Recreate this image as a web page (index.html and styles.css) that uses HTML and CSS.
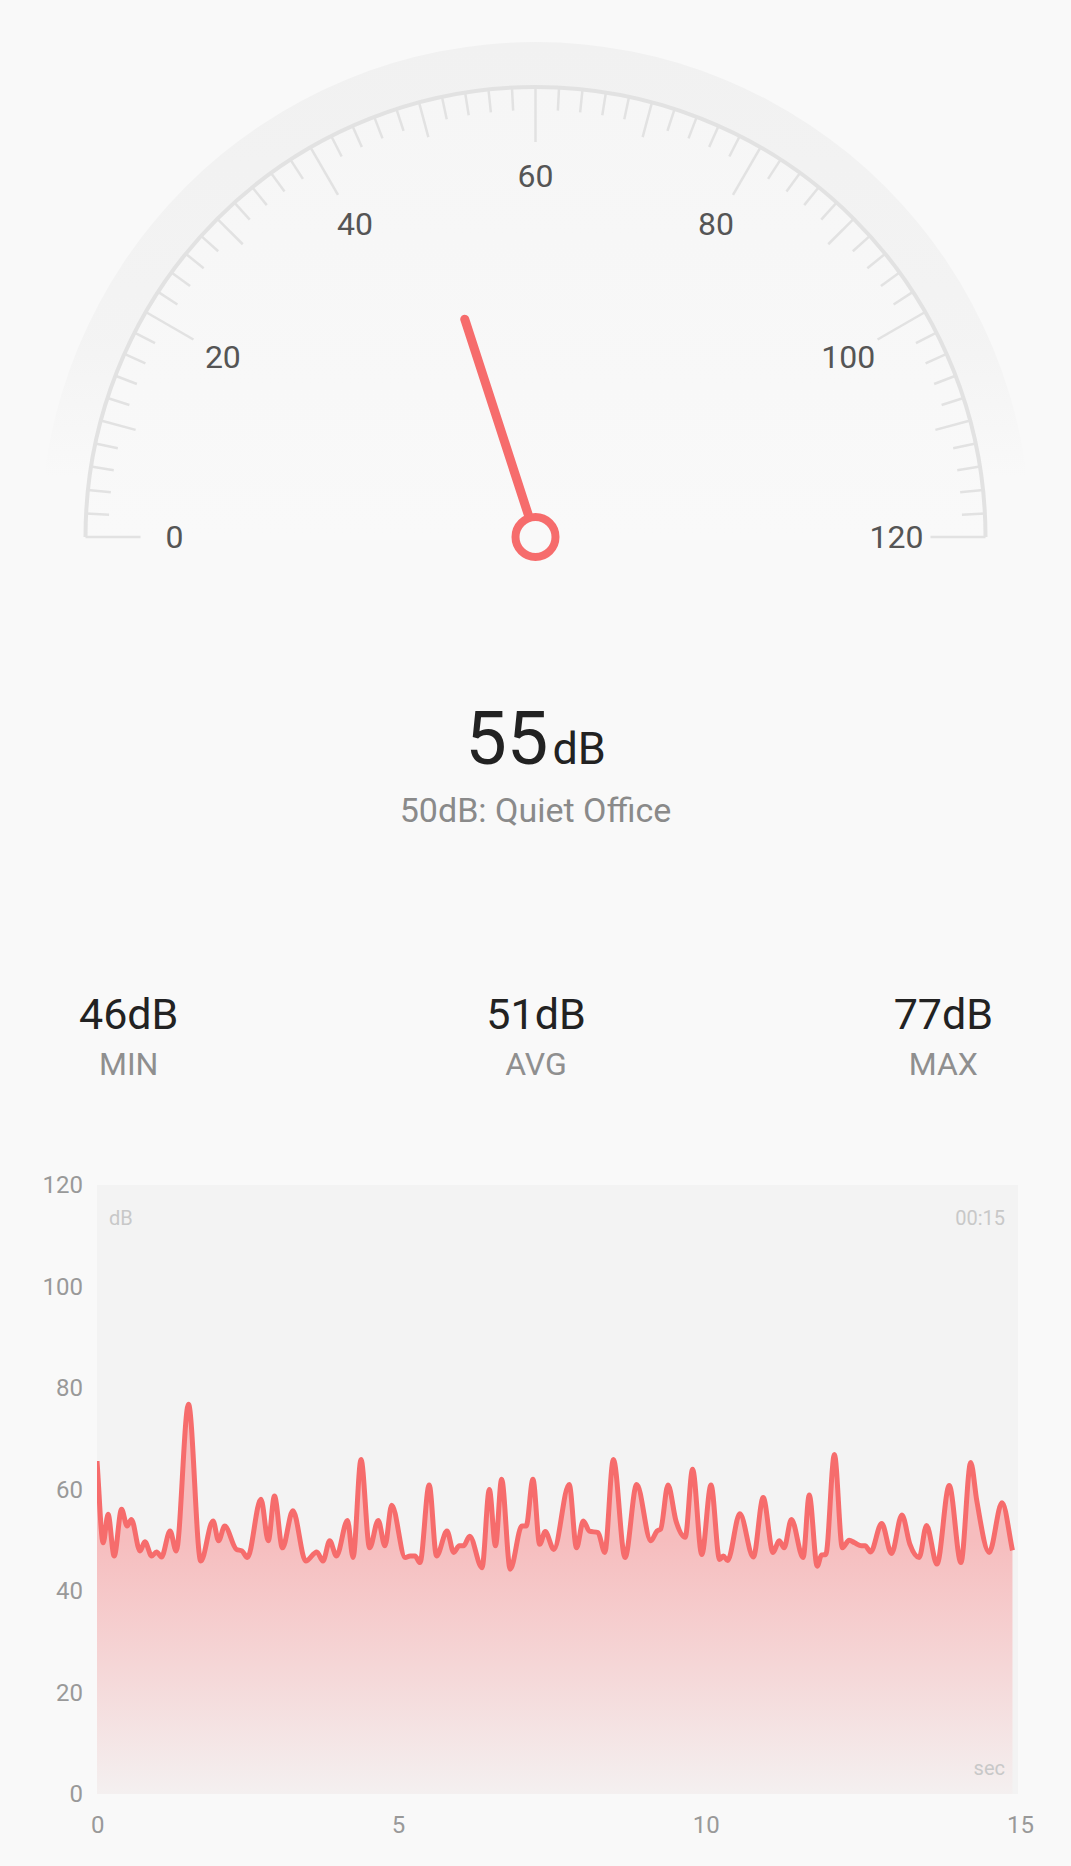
FILE: index.html
```html
<!DOCTYPE html>
<html lang="en">
<head>
    <meta charset="UTF-8">
    <meta name="viewport" content="width=device-width, initial-scale=1.0">
    <title>Sound Meter</title>
    <link rel="stylesheet" href="styles.css">
</head>
<body>
    <div class="meter">
        <!-- Dial: ticks, numbers and needle get filled in by the script -->
        <svg class="gauge" id="gauge" viewBox="0 0 1071 590" width="1071" height="590">
            <defs>
                <linearGradient id="halo-fade" x1="0" y1="42" x2="0" y2="537" gradientUnits="userSpaceOnUse">
                    <stop offset="0" stop-color="#f1f1f1" stop-opacity="1"/>
                    <stop offset="0.6" stop-color="#f1f1f1" stop-opacity="0.7"/>
                    <stop offset="0.88" stop-color="#f1f1f1" stop-opacity="0"/>
                </linearGradient>
                <linearGradient id="face-fade" x1="0" y1="87" x2="0" y2="537" gradientUnits="userSpaceOnUse">
                    <stop offset="0" stop-color="#f6f6f6"/>
                    <stop offset="1" stop-color="#f9f9f9"/>
                </linearGradient>
            </defs>
            <path class="halo" d="M40.5 537 A495 495 0 0 1 1030.5 537 Z"/>
            <path class="dial-face" d="M85.5 537 A450 450 0 0 1 985.5 537 Z"/>
            <path class="dial-arc" d="M85.5 537 A450 450 0 0 1 985.5 537"/>
            <g id="ticks"></g>
            <g id="tick-labels"></g>
            <line class="needle" id="needle"/>
            <circle class="needle-hub" cx="535.5" cy="537" r="20"/>
        </svg>

        <div class="reading">
            <span class="reading-value">55</span><span class="reading-unit">dB</span>
        </div>
        <div class="reading-note">50dB: Quiet Office</div>

        <div class="stats">
            <div class="stat">
                <div class="stat-value">46dB</div>
                <div class="stat-label">MIN</div>
            </div>
            <div class="stat">
                <div class="stat-value">51dB</div>
                <div class="stat-label">AVG</div>
            </div>
            <div class="stat">
                <div class="stat-value">77dB</div>
                <div class="stat-label">MAX</div>
            </div>
        </div>

        <div class="chart">
            <div class="y-axis">
                <span class="y-label">120</span>
                <span class="y-label">100</span>
                <span class="y-label">80</span>
                <span class="y-label">60</span>
                <span class="y-label">40</span>
                <span class="y-label">20</span>
                <span class="y-label">0</span>
            </div>
            <div class="plot">
                <svg class="plot-graph" viewBox="0 0 921 609" preserveAspectRatio="none">
                    <defs>
                        <linearGradient id="area-fade" x1="0" y1="355" x2="0" y2="609" gradientUnits="userSpaceOnUse">
                            <stop offset="0" stop-color="#f6bdbe"/>
                            <stop offset="1" stop-color="#f4f0f0"/>
                        </linearGradient>
                    </defs>
                    <path class="plot-area" id="plot-area"/>
                    <path class="plot-line" id="plot-line"/>
                </svg>
                <div class="plot-notes">
                    <div class="plot-notes-top">
                        <span>dB</span>
                        <span>00:15</span>
                    </div>
                    <div class="plot-notes-bottom">sec</div>
                </div>
            </div>
            <div class="x-axis">
                <span class="x-label">0</span>
                <span class="x-label">5</span>
                <span class="x-label">10</span>
                <span class="x-label">15</span>
            </div>
        </div>
    </div>

    <script>
        document.addEventListener("DOMContentLoaded", function() {
            const svgNS = "http://www.w3.org/2000/svg";
            const cx = 535.5, cy = 537, radius = 450;

            // last 15 seconds of readings: [seconds, dB]
            const samples = [
                [0,65.6],[0.10,49.5],[0.18,55.1],[0.28,46.9],[0.40,56.1],[0.49,52.8],[0.56,54.1],[0.70,47.9],
                [0.78,49.7],[0.89,46.9],[0.97,47.7],[1.05,46.7],[1.19,51.8],[1.29,47.9],[1.49,76.8],[1.69,45.9],
                [1.89,53.8],[1.98,49.9],[2.08,52.8],[2.27,48.2],[2.36,47.9],[2.45,46.6],[2.67,58.1],[2.79,49.9],
                [2.89,58.7],[3.02,48.5],[3.19,55.8],[3.40,45.9],[3.58,47.7],[3.68,45.9],[3.79,49.9],[3.90,46.9],
                [4.08,53.9],[4.17,46.6],[4.30,65.9],[4.44,48.5],[4.58,53.9],[4.69,48.9],[4.80,56.9],[5.02,46.6],
                [5.10,46.9],[5.18,46.9],[5.26,45.6],[5.41,60.9],[5.53,46.9],[5.70,51.8],[5.81,47.6],[5.90,48.9],
                [5.97,48.9],[6.07,50.8],[6.27,44.6],[6.39,60.0],[6.49,48.9],[6.59,62.0],[6.73,44.3],[6.92,52.8],
                [6.99,52.8],[7.10,62.0],[7.21,49.2],[7.30,51.7],[7.44,48.2],[7.69,61.0],[7.81,48.5],[7.92,53.8],
                [8.02,51.8],[8.16,51.5],[8.27,47.6],[8.41,65.9],[8.60,46.6],[8.79,61.0],[9.02,49.9],[9.12,51.8],
                [9.18,52.2],[9.30,60.9],[9.43,53.8],[9.58,50.6],[9.70,64.0],[9.85,47.2],[10.00,60.9],[10.14,46.2],
                [10.20,46.9],[10.27,46.0],[10.47,55.2],[10.69,46.7],[10.85,58.4],[11.01,47.6],[11.11,49.9],[11.19,48.5],
                [11.31,54.1],[11.50,46.6],[11.60,58.9],[11.73,44.9],[11.80,47.1],[11.87,47.2],[12.01,66.9],[12.14,48.5],
                [12.25,50.0],[12.34,49.5],[12.45,48.9],[12.51,48.9],[12.60,47.7],[12.78,53.3],[12.94,47.4],[13.11,55.0],
                [13.24,49.2],[13.39,46.6],[13.51,52.9],[13.68,45.3],[13.88,60.8],[14.07,45.6],[14.23,65.3],[14.33,57.7],
                [14.53,47.6],[14.74,57.4],[14.91,48.0]
            ];

            function polar(value, r) {
                const a = Math.PI * (1 - value / 120);
                return [cx + Math.cos(a) * r, cy - Math.sin(a) * r];
            }

            function line(p1, p2, cls) {
                const el = document.createElementNS(svgNS, "line");
                el.setAttribute("x1", p1[0]);
                el.setAttribute("y1", p1[1]);
                el.setAttribute("x2", p2[0]);
                el.setAttribute("y2", p2[1]);
                if (cls) el.setAttribute("class", cls);
                return el;
            }

            // Ticks every 2 dB, longer ones at 10 and 20
            const ticks = document.getElementById("ticks");
            for (let i = 0; i <= 60; i++) {
                const value = i * 2;
                const len = i % 10 === 0 ? 55 : (i % 5 === 0 ? 36 : 23);
                ticks.appendChild(line(polar(value, radius), polar(value, radius - len), "tick"));
            }

            const labels = document.getElementById("tick-labels");
            for (let v = 0; v <= 120; v += 20) {
                const p = polar(v, 361);
                const t = document.createElementNS(svgNS, "text");
                t.setAttribute("x", p[0]);
                t.setAttribute("y", p[1]);
                t.setAttribute("class", "tick-label");
                t.textContent = v;
                labels.appendChild(t);
            }

            // Needle follows the latest sample
            const current = samples[samples.length - 1][1];
            const needle = document.getElementById("needle");
            const from = polar(current, 24), to = polar(current, 229);
            needle.setAttribute("x1", from[0]);
            needle.setAttribute("y1", from[1]);
            needle.setAttribute("x2", to[0]);
            needle.setAttribute("y2", to[1]);

            // Chart: monotone curve through the samples
            const w = 921, h = 609;
            const pts = samples.map(s => [s[0] / 15 * w, h - s[1] / 120 * h]);

            function monotonePath(p) {
                const n = p.length;
                const slopes = [];
                for (let i = 0; i < n - 1; i++) {
                    slopes.push((p[i + 1][1] - p[i][1]) / (p[i + 1][0] - p[i][0]));
                }
                const tan = [];
                for (let i = 0; i < n; i++) {
                    if (i === 0) { tan.push(slopes[0]); continue; }
                    if (i === n - 1) { tan.push(slopes[n - 2]); continue; }
                    const s0 = slopes[i - 1], s1 = slopes[i];
                    if (s0 * s1 <= 0) { tan.push(0); continue; }
                    const h0 = p[i][0] - p[i - 1][0], h1 = p[i + 1][0] - p[i][0];
                    const mid = (s0 * h1 + s1 * h0) / (h0 + h1);
                    tan.push(Math.sign(s0) * Math.min(2 * Math.abs(s0), 2 * Math.abs(s1), Math.abs(mid)));
                }
                let d = "M" + p[0][0].toFixed(2) + " " + p[0][1].toFixed(2);
                for (let i = 0; i < n - 1; i++) {
                    const dx = (p[i + 1][0] - p[i][0]) / 3;
                    d += " C" + (p[i][0] + dx).toFixed(2) + " " + (p[i][1] + tan[i] * dx).toFixed(2) +
                         " " + (p[i + 1][0] - dx).toFixed(2) + " " + (p[i + 1][1] - tan[i + 1] * dx).toFixed(2) +
                         " " + p[i + 1][0].toFixed(2) + " " + p[i + 1][1].toFixed(2);
                }
                return d;
            }

            const curve = monotonePath(pts);
            document.getElementById("plot-line").setAttribute("d", curve);
            document.getElementById("plot-area").setAttribute("d",
                curve + " L" + pts[pts.length - 1][0].toFixed(2) + " " + h + " L0 " + h + " Z");
        });
    </script>
</body>
</html>
```

FILE: styles.css
```css
body {
    margin: 0;
    background: #f9f9f9;
    font-family: 'Roboto', sans-serif;
    color: #222;
}
.meter {
    width: 1071px;
}

/* Dial */
.gauge {
    display: block;
}
.halo {
    fill: url(#halo-fade);
}
.dial-face {
    fill: url(#face-fade);
}
.dial-arc {
    fill: none;
    stroke: #e2e2e2;
    stroke-width: 4;
}
.tick {
    stroke: #e2e2e2;
    stroke-width: 2.5;
}
.tick-label {
    font-family: 'Roboto', sans-serif;
    font-size: 32px;
    fill: #555;
    text-anchor: middle;
    dominant-baseline: central;
}
.needle {
    stroke: #f66c6c;
    stroke-width: 9;
    stroke-linecap: round;
}
.needle-hub {
    fill: #f9f9f9;
    stroke: #f66c6c;
    stroke-width: 8;
}

/* Current reading */
.reading {
    display: flex;
    justify-content: center;
    align-items: baseline;
    margin-top: 112px;
}
.reading-value {
    font-size: 74px;
    line-height: 74px;
}
.reading-unit {
    font-size: 45px;
    line-height: 45px;
    margin-left: 4px;
}
.reading-note {
    margin-top: 14px;
    text-align: center;
    font-size: 34px;
    line-height: 40px;
    color: #8a8a8a;
}

/* Min / avg / max */
.stats {
    display: flex;
    justify-content: space-between;
    margin-top: 160px;
    padding: 0 78px 0 79px;
}
.stat {
    text-align: center;
}
.stat-value {
    font-size: 43px;
    line-height: 48px;
}
.stat-label {
    margin-top: 8px;
    font-size: 32px;
    line-height: 36px;
    color: #8f8f8f;
}

/* History chart */
.chart {
    display: grid;
    grid-template-columns: 97px 921px;
    margin-top: 103px;
}
.y-axis {
    display: flex;
    flex-direction: column;
    justify-content: space-between;
    height: 609px;
    padding-right: 14px;
}
.y-label {
    height: 0;
    display: flex;
    align-items: center;
    justify-content: flex-end;
    font-size: 24px;
    color: #999;
}
.plot {
    position: relative;
    height: 609px;
    background: #f3f3f3;
}
.plot-graph {
    position: absolute;
    top: 0;
    left: 0;
    width: 100%;
    height: 100%;
}
.plot-area {
    fill: url(#area-fade);
}
.plot-line {
    fill: none;
    stroke: #f66c6c;
    stroke-width: 5;
    stroke-linejoin: round;
}
.plot-notes {
    position: relative;
    height: 100%;
    box-sizing: border-box;
    display: flex;
    flex-direction: column;
    justify-content: space-between;
    padding: 19px 13px 12px 12px;
    font-size: 20px;
    line-height: 28px;
    color: #c8c8c8;
}
.plot-notes-top {
    display: flex;
    justify-content: space-between;
}
.plot-notes-bottom {
    text-align: right;
}
.x-axis {
    grid-column: 2;
    display: flex;
    justify-content: space-between;
    margin: 16px -16px 0 -6px;
}
.x-label {
    font-size: 24px;
    line-height: 30px;
    color: #999;
}
```
